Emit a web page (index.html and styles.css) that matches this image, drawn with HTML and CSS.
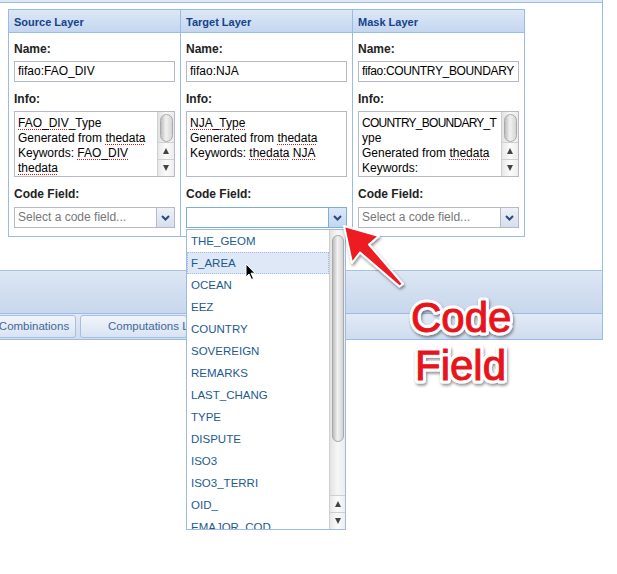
FILE: index.html
```html
<!DOCTYPE html>
<html>
<head>
<meta charset="utf-8">
<link rel="stylesheet" href="styles.css">
</head>
<body>
<div class="frame">
  <div class="topbar"></div>
  <div class="layers">
    <div class="panel">
      <div class="panel-head">Source Layer</div>
      <div class="panel-body">
        <div class="lbl">Name:</div>
        <div class="field">fifao:FAO_DIV</div>
        <div class="lbl gap">Info:</div>
        <div class="area">
          <div class="area-text">
            <div><span class="sp">FAO_DIV</span>_Type</div>
            <div>Generated from <span class="sp">thedata</span></div>
            <div>Keywords: <span class="sp">FAO_DIV</span></div>
            <div><span class="sp">thedata</span></div>
          </div>
          <div class="sbar">
            <div class="strack"><div class="sthumb short"></div></div>
            <div class="sbtn"><span class="tri-up"></span></div>
            <div class="sbtn"><span class="tri-down"></span></div>
          </div>
        </div>
        <div class="lbl gap2">Code Field:</div>
        <div class="combo">
          <div class="combo-input ph">Select a code field...</div>
          <div class="trigger"><svg width="9" height="6" viewBox="0 0 9 6"><path d="M1 1 L4.5 4.5 L8 1" fill="none" stroke="#2b4a7d" stroke-width="2"/></svg></div>
        </div>
      </div>
    </div>

    <div class="panel">
      <div class="panel-head">Target Layer</div>
      <div class="panel-body">
        <div class="lbl">Name:</div>
        <div class="field">fifao:NJA</div>
        <div class="lbl gap">Info:</div>
        <div class="area">
          <div class="area-text">
            <div><span class="sp">NJA_Type</span></div>
            <div>Generated from <span class="sp">thedata</span></div>
            <div>Keywords: <span class="sp">thedata</span> <span class="sp">NJA</span></div>
          </div>
        </div>
        <div class="lbl gap2">Code Field:</div>
        <div class="combo-wrap">
          <div class="combo focus">
            <div class="combo-input"></div>
            <div class="trigger active"><svg width="9" height="6" viewBox="0 0 9 6"><path d="M1 1 L4.5 4.5 L8 1" fill="none" stroke="#2b4a7d" stroke-width="2"/></svg></div>
          </div>
          <div class="dropdown">
            <div class="items">
              <div class="item">THE_GEOM</div>
              <div class="item sel">F_AREA</div>
              <div class="item">OCEAN</div>
              <div class="item">EEZ</div>
              <div class="item">COUNTRY</div>
              <div class="item">SOVEREIGN</div>
              <div class="item">REMARKS</div>
              <div class="item">LAST_CHANG</div>
              <div class="item">TYPE</div>
              <div class="item">DISPUTE</div>
              <div class="item">ISO3</div>
              <div class="item">ISO3_TERRI</div>
              <div class="item">OID_</div>
              <div class="item">EMAJOR_COD</div>
            </div>
            <div class="sbar list-sbar">
              <div class="strack"><div class="sthumb long"></div></div>
              <div class="sbtn"><span class="tri-up"></span></div>
              <div class="sbtn"><span class="tri-down"></span></div>
            </div>
          </div>
        </div>
      </div>
    </div>

    <div class="panel">
      <div class="panel-head">Mask Layer</div>
      <div class="panel-body">
        <div class="lbl">Name:</div>
        <div class="field tight-s">fifao:COUNTRY_BOUNDARY</div>
        <div class="lbl gap">Info:</div>
        <div class="area">
          <div class="area-text">
            <div class="tight">COUNTRY_BOUNDARY_T</div>
            <div>ype</div>
            <div>Generated from <span class="sp">thedata</span></div>
            <div>Keywords:</div>
          </div>
          <div class="sbar">
            <div class="strack"><div class="sthumb short"></div></div>
            <div class="sbtn"><span class="tri-up"></span></div>
            <div class="sbtn"><span class="tri-down"></span></div>
          </div>
        </div>
        <div class="lbl gap2">Code Field:</div>
        <div class="combo">
          <div class="combo-input ph">Select a code field...</div>
          <div class="trigger"><svg width="9" height="6" viewBox="0 0 9 6"><path d="M1 1 L4.5 4.5 L8 1" fill="none" stroke="#2b4a7d" stroke-width="2"/></svg></div>
        </div>
      </div>
    </div>
  </div>
  <div class="toolbar"></div>
  <div class="tabstrip">
    <div class="tab first">Combinations</div>
    <div class="tab second">Computations Log</div>
  </div>
</div>

<svg class="cursor" width="12" height="18" viewBox="0 0 12 18">
  <path d="M1 1 L1 14 L4 11 L6.5 16.5 L8.5 15.5 L6 10.2 L10 10.2 Z" fill="#000" stroke="#fff" stroke-width="1"/>
</svg>

<svg class="callout" width="617" height="574" viewBox="0 0 617 574">
  <defs>
    <filter id="sh" x="-20%" y="-20%" width="140%" height="140%">
      <feDropShadow dx="1" dy="2" stdDeviation="1.6" flood-color="#000" flood-opacity="0.45"/>
    </filter>
  </defs>
  <g filter="url(#sh)">
    <path d="M344 226 L379 236 L369 244.5 L403 284 L399.5 286.5 L360 252.5 L352 263 Z" fill="#ec1c24" stroke="#fff" stroke-width="2" stroke-linejoin="round"/>
    <text class="big" x="411" y="332" fill="#fff" stroke="#fff" stroke-width="7" stroke-linejoin="round">Code</text>
    <text class="big" x="415" y="380" fill="#fff" stroke="#fff" stroke-width="7" stroke-linejoin="round">Field</text>
  </g>
  <text class="big" x="411" y="332" fill="#e8141b" stroke="#e8141b" stroke-width="1">Code</text>
  <text class="big" x="415" y="380" fill="#e8141b" stroke="#e8141b" stroke-width="1">Field</text>
</svg>
</body>
</html>
```

FILE: styles.css
```css
html, body {
  margin: 0;
  padding: 0;
  background: #fff;
}
body {
  position: relative;
  width: 617px;
  height: 574px;
  overflow: hidden;
  font-family: "Liberation Sans", Arial, sans-serif;
  font-size: 12px;
  color: #000;
}
.frame {
  width: 602px;
  border-right: 1px solid #99bbe8;
  border-bottom: 1px solid #99bbe8;
}
.topbar {
  height: 2px;
  background: #dfe8f6;
  border-bottom: 1px solid #99bbe8;
}
.layers {
  height: 267px;
  box-sizing: border-box;
  padding: 6px 0 0 8px;
  display: flex;
  align-items: flex-start;
}
.panel {
  width: 173px;
  box-sizing: border-box;
  border: 1px solid #99bbe8;
  background: #fff;
}
.panel + .panel {
  margin-left: -1px;
}
.panel-head {
  height: 23px;
  box-sizing: border-box;
  padding: 1px 0 0 5px;
  line-height: 22px;
  border-bottom: 1px solid #99bbe8;
  background: linear-gradient(#dce8f6, #c4d6ef);
  font-weight: bold;
  font-size: 11px;
  color: #15428b;
}
.panel-body {
  padding: 8px 5px 8px;
}
.lbl {
  font-weight: bold;
  font-size: 12px;
  line-height: 16px;
  color: #222;
  margin-bottom: 4px;
}
.lbl.gap { margin-top: 9px; }
.lbl.gap2 { margin-top: 9px; margin-bottom: 5px; }
.field {
  height: 21px;
  box-sizing: border-box;
  border: 1px solid #b5b8c8;
  padding: 0 3px;
  line-height: 19px;
  white-space: nowrap;
  overflow: hidden;
}
.tight-s { letter-spacing: -0.35px; }
.area {
  height: 66px;
  box-sizing: border-box;
  border: 1px solid #b5b8c8;
  display: flex;
}
.area-text {
  flex: 1;
  min-width: 0;
  padding: 4px 3px 0;
  line-height: 15px;
  white-space: nowrap;
  overflow: hidden;
}
.tight { letter-spacing: -0.75px; }
.sp {
  text-decoration: underline dotted #e0141b;
  text-underline-offset: 2px;
  text-decoration-thickness: 1px;
}
.sbar {
  width: 16px;
  flex: none;
  display: flex;
  flex-direction: column;
  background: linear-gradient(to right, #e2e2e2, #f7f7f7 50%, #ececec);
  border-left: 1px solid #cfcfcf;
}
.strack {
  flex: 1;
  padding: 2px 1px 0 2px;
}
.sthumb {
  box-sizing: border-box;
  border: 1px solid #a9a9a9;
  border-radius: 7px;
  background: linear-gradient(to right, #bdbdbd, #f2f2f2 45%, #d4d4d4);
}
.sthumb.short { height: 28px; }
.sthumb.long { height: 207px; margin-top: 3px; }
.sbtn {
  height: 16px;
  display: flex;
  align-items: center;
  justify-content: center;
  border-top: 1px solid #cfcfcf;
  background: linear-gradient(to right, #e8e8e8, #fbfbfb 50%, #eeeeee);
}
.tri-up {
  width: 0; height: 0;
  border-left: 3.5px solid transparent;
  border-right: 3.5px solid transparent;
  border-bottom: 6px solid #444;
}
.tri-down {
  width: 0; height: 0;
  border-left: 3.5px solid transparent;
  border-right: 3.5px solid transparent;
  border-top: 6px solid #444;
}
.combo {
  height: 21px;
  box-sizing: border-box;
  border: 1px solid #b5b8c8;
  display: flex;
  background: #fff;
}
.combo.focus { border-color: #7eadd9; }
.combo-input {
  flex: 1;
  padding: 0 3px;
  line-height: 19px;
  white-space: nowrap;
  overflow: hidden;
}
.ph { color: #777; }
.trigger {
  width: 17px;
  flex: none;
  border-left: 1px solid #b5b8c8;
  background: linear-gradient(#eef2f8, #d5dfec);
  display: flex;
  align-items: center;
  justify-content: center;
}
.trigger.active {
  border-left-color: #7eadd9;
  background: linear-gradient(#dbe8f8, #c2d7f2);
}
.combo-wrap { position: relative; }
.dropdown {
  position: absolute;
  left: 0;
  top: 22px;
  width: 160px;
  height: 301px;
  box-sizing: border-box;
  border: 1px solid #9fbbe3;
  background: #fff;
  display: flex;
  z-index: 5;
}
.items {
  flex: 1;
  overflow: hidden;
}
.item {
  height: 22px;
  box-sizing: border-box;
  border: 1px dotted transparent;
  padding-left: 3px;
  line-height: 20px;
  font-size: 11.5px;
  color: #1c5b8b;
  white-space: nowrap;
}
.item.sel {
  background: #dfe8f6;
  border-color: #a3bae9;
}
.list-sbar { width: 15px; }
.toolbar {
  height: 42px;
  border-top: 1px solid #a6c1e4;
  background: linear-gradient(#dce6f4, #c8d7ec);
}
.tabstrip {
  height: 25px;
  border-top: 1px solid #99bbe8;
  background: linear-gradient(#e2eaf6, #cfdcee);
  display: flex;
  overflow: hidden;
}
.tab {
  height: 23px;
  margin-top: 1px;
  box-sizing: border-box;
  border: 1px solid #a4bfe2;
  border-radius: 3px;
  background: linear-gradient(#f1f5fb, #d8e3f2);
  color: #44669a;
  font-size: 11.5px;
  line-height: 21px;
  white-space: nowrap;
  overflow: hidden;
  flex: none;
}
.tab.first { width: 84px; margin-left: -8px; text-align: center; }
.tab.second { width: 107px; margin-left: 4px; padding-left: 27px; }
.cursor {
  position: absolute;
  left: 245px;
  top: 263px;
  z-index: 8;
}
.callout {
  position: absolute;
  left: 0;
  top: 0;
  pointer-events: none;
  z-index: 9;
}
.big {
  font-family: "Liberation Sans", Arial, sans-serif;
  font-size: 42px;
}
```
